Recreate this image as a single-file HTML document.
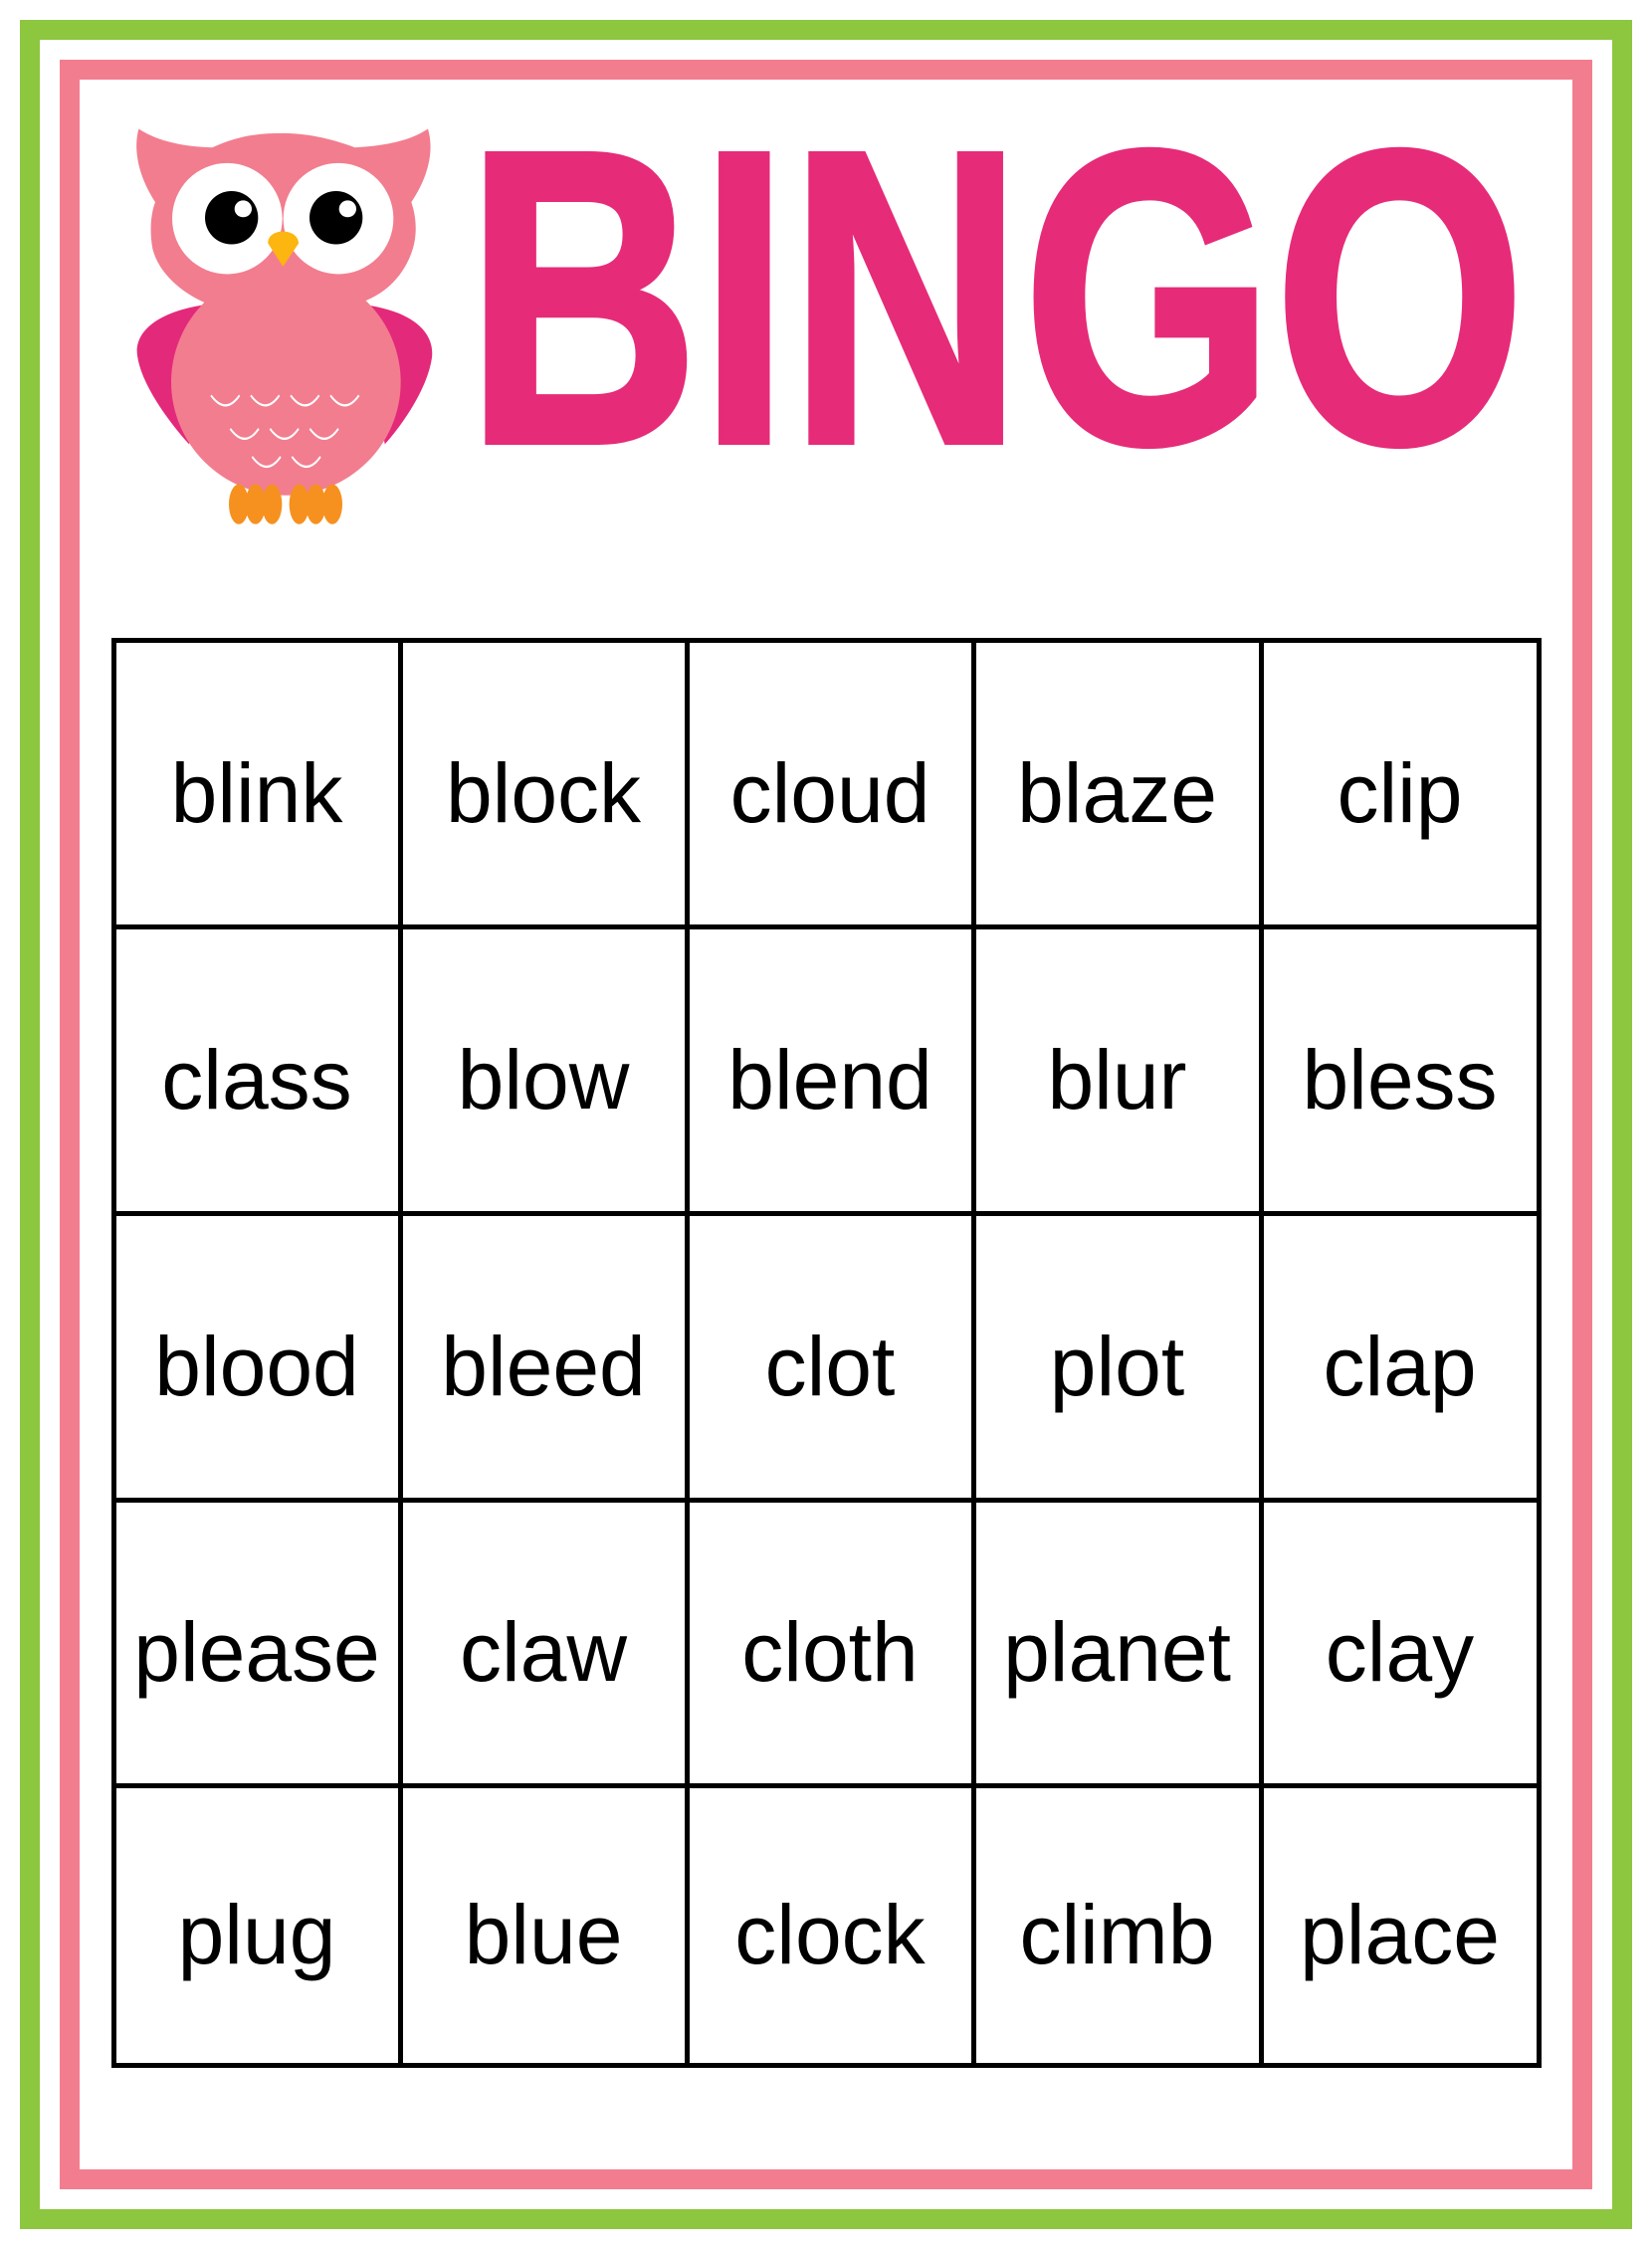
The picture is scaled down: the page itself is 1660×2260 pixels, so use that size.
<!DOCTYPE html>
<html><head><meta charset="utf-8"><style>
html,body{margin:0;padding:0;background:#fff;}
body{width:1660px;height:2260px;position:relative;overflow:hidden;font-family:"Liberation Sans",Arial,sans-serif;}
.g{position:absolute;left:20px;top:20px;width:1580px;height:2180px;border:20px solid #8dc63f;}
.p{position:absolute;left:60px;top:60px;width:1500px;height:2100px;border:20px solid #f27d8f;}
.c{position:absolute;display:flex;align-items:center;justify-content:center;font-size:84px;color:#000;box-sizing:border-box;padding-top:20px;}
.l{position:absolute;background:#000;}
</style></head><body>
<div class="g"></div><div class="p"></div>
<svg style="position:absolute;left:0;top:0" width="500" height="700" viewBox="0 0 1500 1568" preserveAspectRatio="none">
<path d="M630,685 C470,700 400,750 415,805 C430,870 510,950 570,1000 Z" fill="#e3297a"/>
<path d="M1090,685 C1250,700 1310,750 1302,805 C1290,870 1220,950 1160,1000 Z" fill="#e3297a"/>
<ellipse cx="862" cy="860" rx="346" ry="255" fill="#f27d8f"/>
<path d="M418,290 C480,320 560,330 640,332 C720,305 780,300 850,300 C920,300 990,310 1070,332 C1150,328 1230,320 1290,290 C1310,340 1290,400 1240,455 C1260,500 1255,540 1240,570 C1210,630 1150,665 1090,680 L630,685 C560,665 480,620 460,560 C450,520 455,480 468,455 C420,400 400,340 418,290 Z" fill="#f27d8f"/>
<ellipse cx="685" cy="492" rx="166" ry="125" fill="#fff"/>
<ellipse cx="1020" cy="492" rx="166" ry="125" fill="#fff"/>
<ellipse cx="698" cy="490" rx="80" ry="60" fill="#000"/>
<ellipse cx="1013" cy="490" rx="80" ry="60" fill="#000"/>
<ellipse cx="733" cy="470" rx="26" ry="19" fill="#fff"/>
<ellipse cx="1048" cy="470" rx="26" ry="19" fill="#fff"/>
<path d="M808,548 C805,512 900,512 900,548 L853,600 Z" fill="#fdb50f"/>
<g fill="#f6911f">
<ellipse cx="720" cy="1135" rx="30" ry="45"/><ellipse cx="770" cy="1135" rx="30" ry="45"/><ellipse cx="820" cy="1135" rx="30" ry="45"/>
<ellipse cx="902" cy="1135" rx="30" ry="45"/><ellipse cx="952" cy="1135" rx="30" ry="45"/><ellipse cx="1002" cy="1135" rx="30" ry="45"/>
</g>
<g fill="none" stroke="#fff" stroke-width="5">
<path d="M636,890 Q680,935 722,890"/><path d="M756,890 Q800,935 842,890"/><path d="M876,890 Q920,935 962,890"/><path d="M996,890 Q1040,935 1082,890"/>
<path d="M694,965 Q738,1010 780,965"/><path d="M814,965 Q858,1010 900,965"/><path d="M934,965 Q978,1010 1020,965"/>
<path d="M760,1028 Q804,1073 846,1028"/><path d="M880,1028 Q924,1073 966,1028"/>
</g>
</svg>
<svg style="position:absolute;left:460px;top:130px" width="1100" height="340">
<text x="8" y="314" font-family="Liberation Sans, sans-serif" font-weight="bold" font-size="420" fill="#e62b78" stroke="#e62b78" stroke-width="6" textLength="1065" lengthAdjust="spacingAndGlyphs">BINGO</text>
</svg>
<div class="l" style="left:112px;top:641px;width:1437px;height:5px"></div>
<div class="l" style="left:112px;top:929px;width:1437px;height:5px"></div>
<div class="l" style="left:112px;top:1217px;width:1437px;height:5px"></div>
<div class="l" style="left:112px;top:1505px;width:1437px;height:5px"></div>
<div class="l" style="left:112px;top:1792px;width:1437px;height:5px"></div>
<div class="l" style="left:112px;top:2073px;width:1437px;height:5px"></div>
<div class="l" style="left:112px;top:641px;width:5px;height:1437px"></div>
<div class="l" style="left:400px;top:641px;width:5px;height:1437px"></div>
<div class="l" style="left:688px;top:641px;width:5px;height:1437px"></div>
<div class="l" style="left:976px;top:641px;width:5px;height:1437px"></div>
<div class="l" style="left:1265px;top:641px;width:5px;height:1437px"></div>
<div class="l" style="left:1544px;top:641px;width:5px;height:1437px"></div>
<div class="c" style="left:114px;top:643px;width:288px;height:288px">blink</div>
<div class="c" style="left:402px;top:643px;width:288px;height:288px">block</div>
<div class="c" style="left:690px;top:643px;width:288px;height:288px">cloud</div>
<div class="c" style="left:978px;top:643px;width:289px;height:288px">blaze</div>
<div class="c" style="left:1267px;top:643px;width:279px;height:288px">clip</div>
<div class="c" style="left:114px;top:931px;width:288px;height:288px">class</div>
<div class="c" style="left:402px;top:931px;width:288px;height:288px">blow</div>
<div class="c" style="left:690px;top:931px;width:288px;height:288px">blend</div>
<div class="c" style="left:978px;top:931px;width:289px;height:288px">blur</div>
<div class="c" style="left:1267px;top:931px;width:279px;height:288px">bless</div>
<div class="c" style="left:114px;top:1219px;width:288px;height:288px">blood</div>
<div class="c" style="left:402px;top:1219px;width:288px;height:288px">bleed</div>
<div class="c" style="left:690px;top:1219px;width:288px;height:288px">clot</div>
<div class="c" style="left:978px;top:1219px;width:289px;height:288px">plot</div>
<div class="c" style="left:1267px;top:1219px;width:279px;height:288px">clap</div>
<div class="c" style="left:114px;top:1507px;width:288px;height:287px">please</div>
<div class="c" style="left:402px;top:1507px;width:288px;height:287px">claw</div>
<div class="c" style="left:690px;top:1507px;width:288px;height:287px">cloth</div>
<div class="c" style="left:978px;top:1507px;width:289px;height:287px">planet</div>
<div class="c" style="left:1267px;top:1507px;width:279px;height:287px">clay</div>
<div class="c" style="left:114px;top:1794px;width:288px;height:281px">plug</div>
<div class="c" style="left:402px;top:1794px;width:288px;height:281px">blue</div>
<div class="c" style="left:690px;top:1794px;width:288px;height:281px">clock</div>
<div class="c" style="left:978px;top:1794px;width:289px;height:281px">climb</div>
<div class="c" style="left:1267px;top:1794px;width:279px;height:281px">place</div>
</body></html>
